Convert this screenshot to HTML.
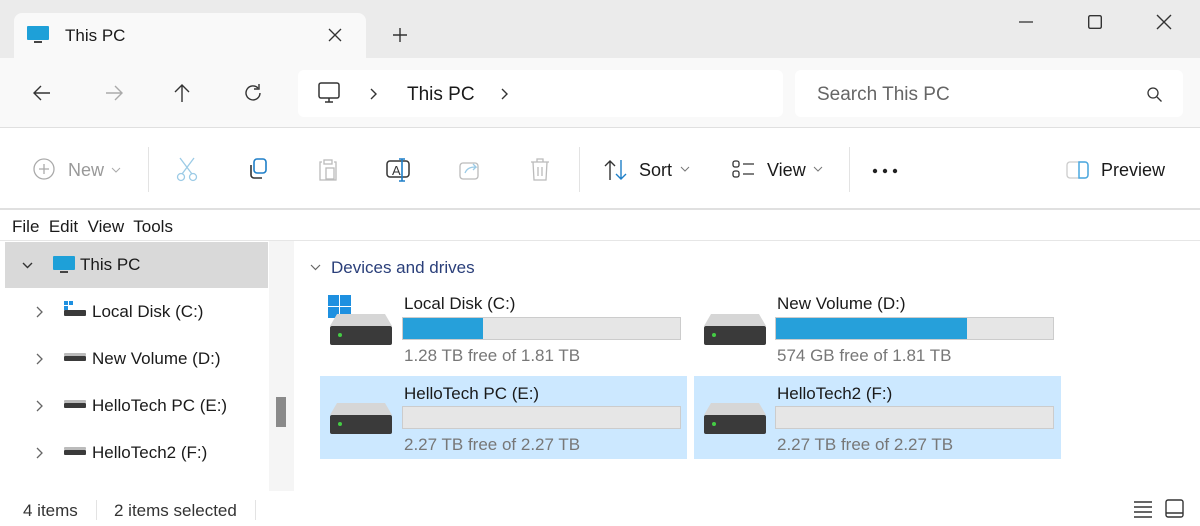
<!DOCTYPE html>
<html><head><meta charset="utf-8"><style>
*{margin:0;padding:0;box-sizing:border-box}
body{width:1200px;height:526px;overflow:hidden;background:#fff;font-family:"Liberation Sans",sans-serif;color:#1a1a1a;position:relative}
.a{position:absolute}
.t{position:absolute;white-space:nowrap}
svg{position:absolute;overflow:visible}
</style></head><body>
<div class="a" style="left:0;top:0;width:1200px;height:58px;background:#ebebeb"></div>
<div class="a" style="left:14px;top:13px;width:352px;height:46px;background:#f9f9f9;border-radius:8px 8px 0 0"></div>
<svg style="left:26px;top:25px" width="24" height="20"><rect x="1" y="1" width="22" height="14" rx="1" fill="#1ea0d8"/><rect x="8" y="16" width="8" height="2" fill="#444"/></svg>
<div class="t" style="left:65px;top:26px;font-size:17px">This PC</div>
<svg style="left:329px;top:29px" width="12" height="12"><path d="M0 0l12 12M12 0L0 12" stroke="#333" stroke-width="1.3"/></svg>
<svg style="left:393px;top:28px" width="14" height="14"><path d="M7 0v14M0 7h14" stroke="#333" stroke-width="1.4"/></svg>
<svg style="left:1019px;top:21px" width="14" height="2"><path d="M0 1h14" stroke="#333" stroke-width="1.3"/></svg>
<svg style="left:1088px;top:15px" width="14" height="14"><rect x="0.7" y="0.7" width="12.6" height="12.6" rx="1.5" fill="none" stroke="#333" stroke-width="1.4"/></svg>
<svg style="left:1157px;top:15px" width="14" height="14"><path d="M0 0l14 14M14 0L0 14" stroke="#333" stroke-width="1.4"/></svg>
<div class="a" style="left:0;top:58px;width:1200px;height:70px;background:#f9f9f9;border-bottom:1px solid #e0e0e0"></div>
<svg style="left:33px;top:85px" width="18" height="16"><path d="M17 8H1M8 1L1 8l7 7" fill="none" stroke="#333" stroke-width="1.4"/></svg>
<svg style="left:105px;top:85px" width="18" height="16"><path d="M1 8h16M10 1l7 7-7 7" fill="none" stroke="#aaa" stroke-width="1.4"/></svg>
<svg style="left:174px;top:84px" width="16" height="18"><path d="M8 18V1M1 8l7-7 7 7" fill="none" stroke="#333" stroke-width="1.4"/></svg>
<svg style="left:245px;top:84px" width="18" height="18"><path d="M15 9a7 7 0 1 1-2-5" fill="none" stroke="#333" stroke-width="1.4"/><path d="M14 0v5h-5" fill="none" stroke="#333" stroke-width="1.4"/></svg>
<div class="a" style="left:298px;top:70px;width:485px;height:47px;background:#fff;border-radius:6px"></div>
<svg style="left:318px;top:82px" width="24" height="22"><rect x="1" y="1" width="20" height="15" rx="2" fill="none" stroke="#333" stroke-width="1.5"/><path d="M7 20h8M11 16v4" stroke="#333" stroke-width="1.5"/></svg>
<svg style="left:370px;top:88px" width="7" height="12"><path d="M1 1l5 5-5 5" fill="none" stroke="#333" stroke-width="1.4"/></svg>
<div class="t" style="left:407px;top:84px;font-size:19px">This PC</div>
<svg style="left:501px;top:88px" width="7" height="12"><path d="M1 1l5 5-5 5" fill="none" stroke="#333" stroke-width="1.4"/></svg>
<div class="a" style="left:795px;top:70px;width:388px;height:47px;background:#fff;border-radius:6px"></div>
<div class="t" style="left:817px;top:84px;font-size:19px;color:#666">Search This PC</div>
<svg style="left:1147px;top:87px" width="16" height="16"><circle cx="6" cy="6" r="5" fill="none" stroke="#333" stroke-width="1.3"/><path d="M10 10l4.5 4.5" stroke="#333" stroke-width="1.3"/></svg>
<div class="a" style="left:0;top:208px;width:1200px;height:2px;background:#e0e0e0"></div>
<svg style="left:33px;top:158px" width="22" height="22"><circle cx="11" cy="11" r="10" fill="none" stroke="#aaa" stroke-width="1.3"/><path d="M11 6v10M6 11h10" stroke="#aaa" stroke-width="1.3"/></svg>
<div class="t" style="left:68px;top:160px;font-size:18px;color:#999">New</div>
<svg style="left:112px;top:168px" width="8" height="5"><path d="M0 0l4 4 4-4" fill="none" stroke="#aaa" stroke-width="1"/></svg>
<div class="a" style="left:148px;top:147px;width:1px;height:45px;background:#e3e3e3"></div>
<svg style="left:176px;top:157px" width="22" height="26"><path d="M4 1l12 16M18 1L6 17" stroke="#9ccbe6" stroke-width="1.3" fill="none"/><circle cx="5" cy="20" r="3.5" fill="none" stroke="#9ccbe6" stroke-width="1.3"/><circle cx="17" cy="20" r="3.5" fill="none" stroke="#9ccbe6" stroke-width="1.3"/></svg>
<svg style="left:247px;top:158px" width="22" height="24"><rect x="7" y="1" width="12" height="14" rx="3" fill="none" stroke="#1e7fc8" stroke-width="1.6"/><path d="M4 7v10a3 3 0 003 3h8" fill="none" stroke="#333" stroke-width="1.6"/></svg>
<svg style="left:317px;top:158px" width="22" height="24"><path d="M5 4H3v18h16V4h-2" fill="none" stroke="#bbb" stroke-width="1.3"/><rect x="7" y="2" width="8" height="4" fill="none" stroke="#bbb" stroke-width="1.3"/><rect x="9" y="10" width="8" height="11" fill="none" stroke="#bbb" stroke-width="1.3"/></svg>
<svg style="left:386px;top:157px" width="26" height="26"><rect x="1" y="4" width="22" height="16" rx="3" fill="none" stroke="#333" stroke-width="1.5"/><text x="6" y="18" font-size="13" font-family="Liberation Sans" fill="#333">A</text><path d="M16 2v22M13 2h6M13 24h6" stroke="#1e7fc8" stroke-width="1.6"/></svg>
<svg style="left:459px;top:160px" width="22" height="20"><rect x="1" y="3" width="18" height="16" rx="3" fill="none" stroke="#bbb" stroke-width="1.3"/><path d="M6 13c2-5 6-6 11-6l-3-3m3 3l-3 3" fill="none" stroke="#9ccbe6" stroke-width="1.3"/></svg>
<svg style="left:530px;top:158px" width="20" height="24"><path d="M1 4h18M7 4V1h6v3M3 4l1 18h12l1-18M8 9v9M12 9v9" fill="none" stroke="#bbb" stroke-width="1.3"/></svg>
<div class="a" style="left:579px;top:147px;width:1px;height:45px;background:#e3e3e3"></div>
<svg style="left:604px;top:160px" width="24" height="20"><path d="M6 20V1M1 6l5-5 5 5" fill="none" stroke="#333" stroke-width="1.4"/><path d="M17 0v19M12 14l5 5 5-5" fill="none" stroke="#1e7fc8" stroke-width="1.4"/></svg>
<div class="t" style="left:639px;top:160px;font-size:18px">Sort</div>
<svg style="left:681px;top:167px" width="8" height="5"><path d="M0 0l4 4 4-4" fill="none" stroke="#777" stroke-width="1"/></svg>
<svg style="left:732px;top:160px" width="24" height="20"><rect x="1" y="1" width="6" height="6" rx="2" fill="none" stroke="#333" stroke-width="1.3"/><rect x="1" y="11" width="6" height="6" rx="2" fill="none" stroke="#333" stroke-width="1.3"/><path d="M11 4h11M11 14h11" stroke="#333" stroke-width="1.3"/></svg>
<div class="t" style="left:767px;top:160px;font-size:18px">View</div>
<svg style="left:814px;top:167px" width="8" height="5"><path d="M0 0l4 4 4-4" fill="none" stroke="#777" stroke-width="1"/></svg>
<div class="a" style="left:849px;top:147px;width:1px;height:45px;background:#e3e3e3"></div>
<svg style="left:872px;top:168px" width="26" height="6"><circle cx="3" cy="3" r="2.2" fill="#222"/><circle cx="13" cy="3" r="2.2" fill="#222"/><circle cx="23" cy="3" r="2.2" fill="#222"/></svg>
<svg style="left:1066px;top:161px" width="24" height="18"><rect x="1" y="1" width="21" height="16" rx="3" fill="none" stroke="#ccc" stroke-width="1.3"/><path d="M13 1h6a3 3 0 013 3v10a3 3 0 01-3 3h-6z" fill="none" stroke="#4aa8e0" stroke-width="1.5"/></svg>
<div class="t" style="left:1101px;top:160px;font-size:18px">Preview</div>
<div class="t" style="left:12px;top:217px;font-size:17px">File&nbsp; Edit&nbsp; View&nbsp; Tools</div>
<div class="a" style="left:0;top:240px;width:1200px;height:1px;background:#e6e6e6"></div>
<div class="a" style="left:269px;top:241px;width:25px;height:250px;background:#f5f5f5"></div>
<div class="a" style="left:276px;top:397px;width:10px;height:30px;background:#8a8a8a"></div>
<div class="a" style="left:5px;top:242px;width:263px;height:46px;background:#d9d9d9"></div>
<svg style="left:22px;top:262px" width="11" height="7"><path d="M1 1l4.5 4.5L10 1" fill="none" stroke="#333" stroke-width="1.4"/></svg>
<svg style="left:52px;top:255px" width="24" height="20"><rect x="1" y="1" width="22" height="14" rx="1" fill="#1ea0d8"/><rect x="8" y="16" width="8" height="2" fill="#444"/></svg>
<div class="t" style="left:80px;top:255px;font-size:17px">This PC</div>
<svg style="left:36px;top:306px" width="7" height="12"><path d="M1 1l5 5-5 5" fill="none" stroke="#666" stroke-width="1.3"/></svg>
<svg style="left:64px;top:301px" width="24" height="18"><rect x="0" y="0" width="4" height="4" fill="#1e90e0"/><rect x="5" y="0" width="4" height="4" fill="#1e90e0"/><rect x="0" y="5" width="4" height="4" fill="#1e90e0"/><rect x="0" y="9" width="22" height="6" rx="1" fill="#3a3a3a"/></svg>
<div class="t" style="left:92px;top:302px;font-size:17px">Local Disk (C:)</div>
<svg style="left:36px;top:353px" width="7" height="12"><path d="M1 1l5 5-5 5" fill="none" stroke="#666" stroke-width="1.3"/></svg>
<svg style="left:64px;top:351px" width="24" height="12"><rect x="0" y="2" width="22" height="3" rx="1" fill="#bbb"/><rect x="0" y="5" width="22" height="5" rx="1" fill="#3a3a3a"/></svg>
<div class="t" style="left:92px;top:349px;font-size:17px">New Volume (D:)</div>
<svg style="left:36px;top:400px" width="7" height="12"><path d="M1 1l5 5-5 5" fill="none" stroke="#666" stroke-width="1.3"/></svg>
<svg style="left:64px;top:398px" width="24" height="12"><rect x="0" y="2" width="22" height="3" rx="1" fill="#bbb"/><rect x="0" y="5" width="22" height="5" rx="1" fill="#3a3a3a"/></svg>
<div class="t" style="left:92px;top:396px;font-size:17px">HelloTech PC (E:)</div>
<svg style="left:36px;top:447px" width="7" height="12"><path d="M1 1l5 5-5 5" fill="none" stroke="#666" stroke-width="1.3"/></svg>
<svg style="left:64px;top:445px" width="24" height="12"><rect x="0" y="2" width="22" height="3" rx="1" fill="#bbb"/><rect x="0" y="5" width="22" height="5" rx="1" fill="#3a3a3a"/></svg>
<div class="t" style="left:92px;top:443px;font-size:17px">HelloTech2 (F:)</div>
<svg style="left:310px;top:264px" width="11" height="7"><path d="M1 1l4.5 4.5L10 1" fill="none" stroke="#666" stroke-width="1.2"/></svg>
<div class="t" style="left:331px;top:258px;font-size:17px;color:#2a3f7a">Devices and drives</div>
<div class="a" style="left:320px;top:376px;width:367px;height:83px;background:#cce8ff"></div>
<div class="a" style="left:694px;top:376px;width:367px;height:83px;background:#cce8ff"></div>
<svg style="left:327px;top:295px" width="26" height="26"><rect x="1" y="0" width="11" height="11" fill="#1e90e0"/><rect x="13" y="0" width="11" height="11" fill="#1e90e0"/><rect x="1" y="12" width="11" height="11" fill="#1e90e0"/><rect x="13" y="12" width="11" height="11" fill="#1e90e0"/></svg>
<svg style="left:329px;top:313px" width="64" height="34"><path d="M8 1h48l7 12H1z" fill="#d6d6d6"/><rect x="1" y="13" width="62" height="19" rx="2" fill="#3a3a3a"/><circle cx="11" cy="22" r="2" fill="#4c4"/></svg>
<svg style="left:703px;top:313px" width="64" height="34"><path d="M8 1h48l7 12H1z" fill="#d6d6d6"/><rect x="1" y="13" width="62" height="19" rx="2" fill="#3a3a3a"/><circle cx="11" cy="22" r="2" fill="#4c4"/></svg>
<svg style="left:329px;top:402px" width="64" height="34"><path d="M8 1h48l7 12H1z" fill="#d6d6d6"/><rect x="1" y="13" width="62" height="19" rx="2" fill="#3a3a3a"/><circle cx="11" cy="22" r="2" fill="#4c4"/></svg>
<svg style="left:703px;top:402px" width="64" height="34"><path d="M8 1h48l7 12H1z" fill="#d6d6d6"/><rect x="1" y="13" width="62" height="19" rx="2" fill="#3a3a3a"/><circle cx="11" cy="22" r="2" fill="#4c4"/></svg>
<div class="t" style="left:404px;top:294px;font-size:17px">Local Disk (C:)</div>
<div class="a" style="left:402px;top:317px;width:279px;height:23px;background:#e6e6e6;border:1px solid #ccc"><div style="width:80px;height:21px;background:#26a0da"></div></div>
<div class="t" style="left:404px;top:346px;font-size:17px;color:#777">1.28 TB free of 1.81 TB</div>
<div class="t" style="left:777px;top:294px;font-size:17px">New Volume (D:)</div>
<div class="a" style="left:775px;top:317px;width:279px;height:23px;background:#e6e6e6;border:1px solid #ccc"><div style="width:191px;height:21px;background:#26a0da"></div></div>
<div class="t" style="left:777px;top:346px;font-size:17px;color:#777">574 GB free of 1.81 TB</div>
<div class="t" style="left:404px;top:384px;font-size:17px">HelloTech PC (E:)</div>
<div class="a" style="left:402px;top:406px;width:279px;height:23px;background:#e6e6e6;border:1px solid #ccc"></div>
<div class="t" style="left:404px;top:435px;font-size:17px;color:#777">2.27 TB free of 2.27 TB</div>
<div class="t" style="left:777px;top:384px;font-size:17px">HelloTech2 (F:)</div>
<div class="a" style="left:775px;top:406px;width:279px;height:23px;background:#e6e6e6;border:1px solid #ccc"></div>
<div class="t" style="left:777px;top:435px;font-size:17px;color:#777">2.27 TB free of 2.27 TB</div>
<div class="t" style="left:23px;top:501px;font-size:17px;color:#333">4 items</div>
<div class="a" style="left:96px;top:500px;width:1px;height:20px;background:#e3e3e3"></div>
<div class="t" style="left:114px;top:501px;font-size:17px;color:#333">2 items selected</div>
<div class="a" style="left:255px;top:500px;width:1px;height:20px;background:#e3e3e3"></div>
<svg style="left:1133px;top:500px" width="20" height="18"><path d="M1 2h18M1 7h18M1 12h18M1 17h18" stroke="#333" stroke-width="1.4"/></svg>
<svg style="left:1165px;top:499px" width="20" height="20"><rect x="1" y="1" width="17" height="17" rx="2" fill="none" stroke="#333" stroke-width="1.4"/><path d="M1 14h17" stroke="#333" stroke-width="1.4"/></svg>
</body></html>
